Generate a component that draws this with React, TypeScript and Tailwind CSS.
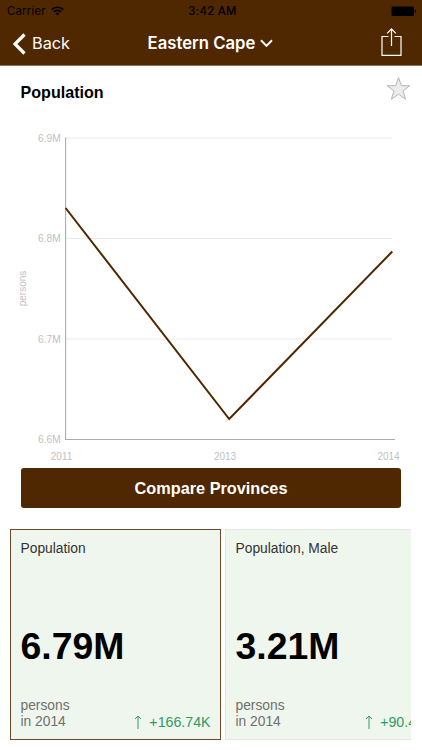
const gridLines = [
  { label: '6.9M', y: 138 },
  { label: '6.8M', y: 238.5 },
  { label: '6.7M', y: 339 },
  { label: '6.6M', y: 439.5 },
];

const years = [
  { label: '2011', x: 61.5 },
  { label: '2013', x: 225 },
  { label: '2014', x: 388.5 },
];

const stats = [
  { title: 'Population', value: '6.79M', unit: 'persons', year: 'in 2014', change: '+166.74K', selected: true },
  { title: 'Population, Male', value: '3.21M', unit: 'persons', year: 'in 2014', change: '+90.4K', selected: false },
];

function StatusBar() {
  return (
    <div className="grid h-[22px] grid-cols-[1fr_auto_1fr] items-center pl-[7px] pr-[6px] text-[11.3px] text-black">
      <div className="flex items-center gap-[5px]">
        <span className="tracking-[0.25px]">Carrier</span>
        <svg width="13" height="10" viewBox="0 0 13 10" fill="none" stroke="currentColor" strokeWidth="1.6">
          <path d="M0.7 3.6a8.2 8.2 0 0 1 11.6 0" />
          <path d="M2.8 5.9a5.2 5.2 0 0 1 7.4 0" />
          <path d="M6.5 9.3 4.5 7.4a2.8 2.8 0 0 1 4 0z" fill="currentColor" stroke="none" />
        </svg>
      </div>
      <span className="pl-[2px] font-medium tracking-[0.3px]">3:42 AM</span>
      <svg className="justify-self-end" width="25" height="11" viewBox="0 0 25 11">
        <rect x="0.5" y="0.5" width="22.5" height="9.5" rx="1.5" fill="#000" />
        <path d="M23.8 3.6c1.5.4 1.5 2.9 0 3.3z" fill="#000" />
      </svg>
    </div>
  );
}

function NavBar() {
  return (
    <div className="grid h-[43px] grid-cols-[1fr_auto_1fr] items-center pl-[12px] pr-[20px] text-white">
      <button className="flex items-center gap-[6px] text-[16.3px]">
        <svg width="14" height="22" viewBox="0 0 14 22" fill="none" stroke="currentColor" strokeWidth="3.2">
          <path d="M12.5 1.5 3 11l9.5 9.5" />
        </svg>
        <span>Back</span>
      </button>
      <button className="flex items-center gap-[5px] pl-[7px] text-[16.7px] font-semibold">
        <span>Eastern Cape</span>
        <svg width="13" height="9" viewBox="0 0 13 9" fill="none" stroke="currentColor" strokeWidth="2">
          <path d="m1 1.3 5.5 5.6L12 1.3" />
        </svg>
      </button>
      <button className="-mt-[3px] justify-self-end" aria-label="Share">
        <svg width="21" height="28" viewBox="0 0 21 28" fill="none" stroke="currentColor" strokeWidth="1.2">
          <path d="M7.5 8.5H1v18.8h19V8.5h-6.5" />
          <path d="M10.5 18V1M6.2 5.3l4.3-4.4 4.3 4.4" />
        </svg>
      </button>
    </div>
  );
}

function Chart() {
  return (
    <svg className="block" width="422" height="357" viewBox="0 111 422 357" fontSize="10" fill="#bfbfbf">
      {gridLines.map((line) => (
        <g key={line.label}>
          <text x="38" y={line.y + 3.7} fontSize="10.2">{line.label}</text>
          <path d={`M66 ${line.y}H392`} stroke="#ebebeb" />
        </g>
      ))}
      {years.map((year) => (
        <text key={year.label} x={year.x} y="459.5" textAnchor="middle">{year.label}</text>
      ))}
      <text x="0" y="0" textAnchor="middle" transform="translate(26 288.5) rotate(-90)">persons</text>
      <path d="M65.6 137.5V439.5H395" fill="none" stroke="#adadad" strokeWidth="1.1" />
      <path d="M65.6 208 229.2 419 392.3 251.5" fill="none" stroke="#4f2700" strokeWidth="2" />
    </svg>
  );
}

function StatCard({ stat }: { stat: (typeof stats)[number] }) {
  return (
    <div
      className={`flex h-[211px] w-[211px] shrink-0 flex-col border bg-[#eff6ee] px-[9.5px] pb-[9px] pt-[11px] text-[13.8px] leading-[16px] ${
        stat.selected ? 'border-[#71472b]' : 'border-[#e3e8e3]'
      }`}
    >
      <div className="text-[#333333]">{stat.title}</div>
      <div className="mt-[68px] text-[37.4px] font-bold leading-[42px] text-black">{stat.value}</div>
      <div className="mt-auto flex items-end justify-between">
        <div className="text-[#6e706e]">
          <div>{stat.unit}</div>
          <div>{stat.year}</div>
        </div>
        <div className="flex items-center gap-[7px] text-[14.2px] text-[#2c9c62]">
          <svg width="8" height="14" viewBox="0 0 8 14" fill="none" stroke="currentColor">
            <path d="M4 14V1M1 4l3-3 3 3" />
          </svg>
          <span>{stat.change}</span>
        </div>
      </div>
    </div>
  );
}

export default function App() {
  return (
    <div className="h-[750px] w-[422px] overflow-hidden bg-white font-['Liberation_Sans',Arial,sans-serif]">
      <header className="h-[66px] border-b border-[#92765c] bg-[#4f2700] font-['Inter',sans-serif]">
        <StatusBar />
        <NavBar />
      </header>

      <div className="flex h-[45px] justify-between pl-[20.5px] pr-[11px]">
        <h1 className="mt-[14px] text-[16.1px] font-bold leading-[24px] text-black">Population</h1>
        <button className="mt-[10px] self-start" aria-label="Favourite">
          <svg className="block" width="25" height="25" viewBox="0 0 25 25" fill="#ececec" stroke="#b7b7b7">
            <path d="m12.5 1.5 2.8 8.2h8.6l-6.9 5.2 2.6 8.4-7.1-5.1-7.1 5.1L8 14.9 1.1 9.7h8.6z" />
          </svg>
        </button>
      </div>

      <Chart />

      <button className="mx-[21px] block h-[40px] w-[380px] rounded-[3px] bg-[#4f2700] text-[16.3px] font-bold text-white">
        Compare Provinces
      </button>

      <div className="ml-[10px] mr-[11px] mt-[21px] flex gap-[4px] overflow-hidden">
        {stats.map((stat) => (
          <StatCard key={stat.title} stat={stat} />
        ))}
      </div>
    </div>
  );
}
